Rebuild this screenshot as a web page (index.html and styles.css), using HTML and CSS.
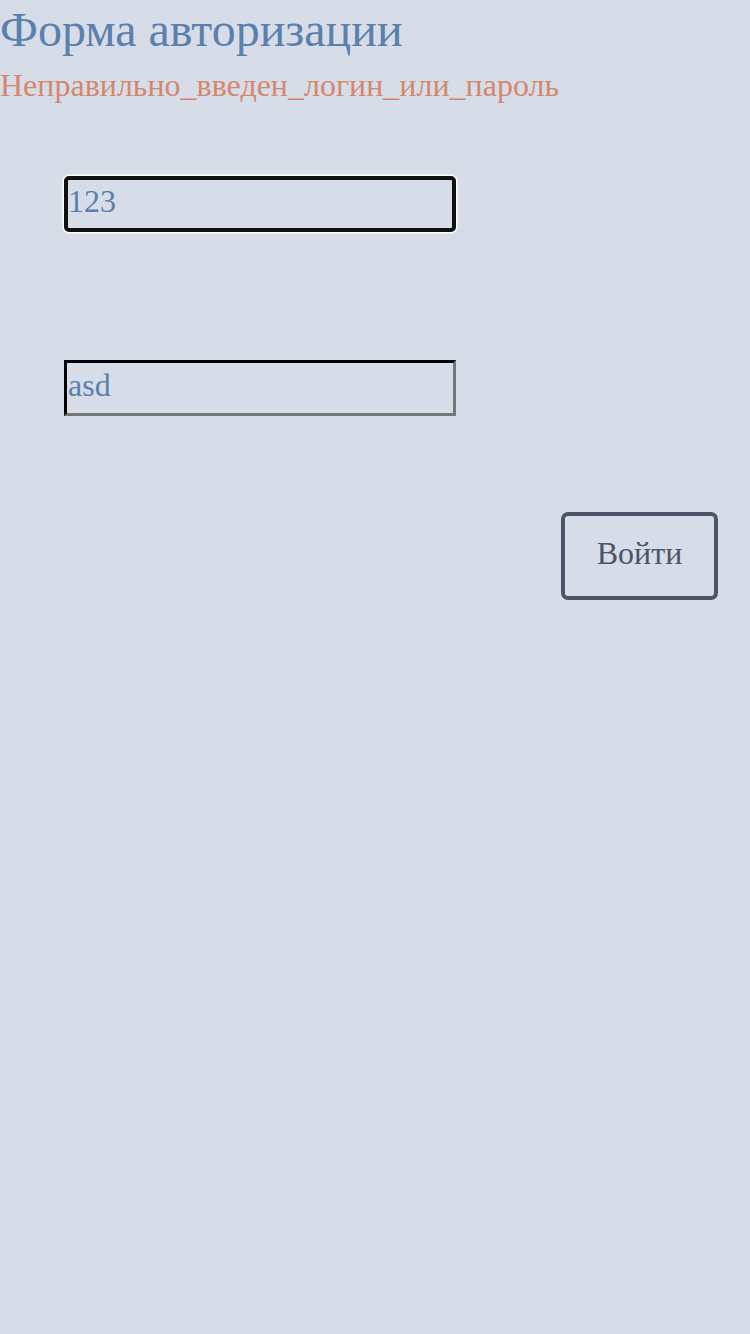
FILE: index.html
```html
<!DOCTYPE html>
<html lang="ru">
<head>
<meta charset="utf-8">
<title>Форма авторизации</title>
<link rel="stylesheet" href="styles.css">
</head>
<body>
<div class="page">
  <h1 class="title">Форма авторизации</h1>
  <p class="error">Неправильно_введен_логин_или_пароль</p>
  <form class="form">
    <div class="field">
      <input class="input input-focus" type="text" value="123">
    </div>
    <div class="field field-second">
      <input class="input" type="text" value="asd">
    </div>
    <div class="actions">
      <button class="btn" type="button">Войти</button>
    </div>
  </form>
</div>
</body>
</html>
```
FILE: styles.css
```css
html, body {
  margin: 0;
  padding: 0;
  background: #d7dde8;
}
body {
  font-family: "Liberation Serif", "Times New Roman", serif;
  min-height: 1334px;
}
.page {
  display: flex;
  flex-direction: column;
}
.title {
  margin: 0;
  font-weight: normal;
  font-size: 48px;
  line-height: 60px;
  color: #5b80ad;
}
.error {
  margin: 0;
  font-size: 32px;
  line-height: 50px;
  color: #d4876c;
}
.form {
  display: flex;
  flex-direction: column;
  padding-top: 66px;
}
.field {
  padding-left: 64px;
}
.field-second {
  padding-top: 128px;
}
.input {
  box-sizing: border-box;
  width: 392px;
  height: 56px;
  margin: 0;
  padding: 0 0 6px 1px;
  font-family: "Liberation Serif", "Times New Roman", serif;
  font-size: 32px;
  color: #5b80ad;
  background: transparent;
  border: 3px inset #767676;
  border-top-color: #222;
  border-left-color: #222;
  outline: none;
}
.input-focus {
  border: 4px solid #111;
  border-radius: 5px;
  box-shadow: 0 0 0 1.5px #fff;
  padding-left: 0;
}
.actions {
  display: flex;
  justify-content: flex-end;
  padding: 96px 32px 0 0;
}
.btn {
  box-sizing: border-box;
  width: 157px;
  height: 88px;
  margin: 0;
  padding: 0 0 6px;
  font-family: "Liberation Serif", "Times New Roman", serif;
  font-size: 32px;
  color: #4a5568;
  background: transparent;
  border: 4px solid #4a5568;
  border-radius: 7px;
}
```
